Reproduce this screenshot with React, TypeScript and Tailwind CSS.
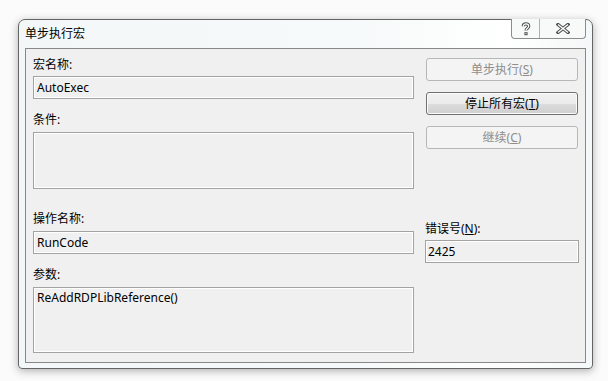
import React from "react";

const font = { fontFamily: '"Noto Sans", "Noto Sans CJK SC", sans-serif' };

function TextBox({ h, children, multi, pl = "pl-[3px]" }: { h: string; children?: React.ReactNode; multi?: boolean; pl?: string }) {
  return (
    <div
      className={`${h} border border-[#a3a3a3] bg-[#f0f0f0] shadow-[inset_0_0_0_1px_#ffffff] ${pl} text-[12px] text-black ${
        multi ? "pt-[1px] leading-[16px]" : "flex items-center leading-[16px]"
      }`}
    >
      {children}
    </div>
  );
}

function Label({ mt, children }: { mt: string; children: React.ReactNode }) {
  return <div className={`${mt} h-[16px] text-[12px] leading-[16px] text-black whitespace-nowrap`}>{children}</div>;
}

function Btn({ mt, enabled, children }: { mt: string; enabled?: boolean; children: React.ReactNode }) {
  return (
    <div
      className={`${mt} ml-[1px] w-[152px] h-[23px] rounded-[3px] border flex items-center justify-center text-[12px] leading-[16px] ${
        enabled
          ? "border-[#707070] text-black bg-[linear-gradient(to_bottom,#f2f2f2_0%,#ebebeb_50%,#dddddd_50%,#cfcfcf_100%)] shadow-[inset_0_0_0_1px_#fbfbfb]"
          : "border-[#b5b8ba] text-[#8d8d8d] bg-[#f4f4f4]"
      }`}
    >
      {children}
    </div>
  );
}

export default function App() {
  return (
    <div className="w-[608px] h-[381px] bg-[#fbfbfb] pl-[18px] pt-[19px] overflow-hidden" style={font}>
      <div className="relative w-[575px] h-[350px] border border-[#656565] rounded-t-[7px] rounded-b-[4px] bg-[linear-gradient(to_right,#f3f7f7,#f7fafa_60%,#ffffff_85%,#f5f8f8)] shadow-[0_2px_9px_rgba(0,0,0,0.3)] flex flex-col">
        <div className="h-[28px] flex items-center pl-[6px] text-[12px] leading-[16px] text-black">单步执行宏</div>
        <div className="absolute top-[-1px] right-[6px] flex h-[20px] border border-t-0 border-[#8c8c8c] rounded-b-[4px] bg-[#f8fafa]">
          <div className="w-[28px] h-full flex items-center justify-center border-r border-[#b0b0b0]">
            <svg width="10" height="14" viewBox="0 0 10 14">
              <path d="M2.3 4.2 C2.3 1.2 7.7 1.2 7.7 4.2 C7.7 6.4 5 6.2 5 8.6" fill="none" stroke="#505050" strokeWidth="3.2" strokeLinecap="butt" />
              <rect x="3.4" y="10.2" width="3.2" height="3" fill="#505050" />
              <path d="M2.3 4.2 C2.3 1.2 7.7 1.2 7.7 4.2 C7.7 6.4 5 6.2 5 8.6" fill="none" stroke="#ffffff" strokeWidth="1.2" />
              <rect x="4.4" y="11.2" width="1.2" height="1" fill="#ffffff" />
            </svg>
          </div>
          <div className="w-[45px] h-full flex items-center justify-center">
            <svg width="14" height="11" viewBox="0 0 14 11">
              <path d="M2 1.5 L12 9.5 M12 1.5 L2 9.5" stroke="#505050" strokeWidth="3.4" strokeLinecap="square" />
              <path d="M2 1.5 L12 9.5 M12 1.5 L2 9.5" stroke="#ffffff" strokeWidth="1.3" strokeLinecap="butt" />
            </svg>
          </div>
        </div>
        <div className="mx-[6px] mb-[5px] flex-1 border border-[#888888] bg-[#f0f0f0] flex">
          <div className="ml-[7px] w-[381px] flex flex-col">
            <Label mt="mt-[8px]">宏名称:</Label>
            <div className="mt-[3px]">
              <TextBox h="h-[23px]">AutoExec</TextBox>
            </div>
            <Label mt="mt-[13px]">条件:</Label>
            <div className="mt-[4px]">
              <TextBox h="h-[57px]" multi />
            </div>
            <Label mt="mt-[22px]">操作名称:</Label>
            <div className="mt-[4px]">
              <TextBox h="h-[23px]">RunCode</TextBox>
            </div>
            <Label mt="mt-[13px]">参数:</Label>
            <div className="mt-[4px]">
              <TextBox h="h-[66px]" multi>
                <div className="pt-[1px]">ReAddRDPLibReference()</div>
              </TextBox>
            </div>
          </div>
          <div className="ml-[11px] w-[154px] flex flex-col">
            <Btn mt="mt-[9px]">
              单步执行(<span className="underline">S</span>)
            </Btn>
            <Btn mt="mt-[11px]" enabled>
              停止所有宏(<span className="underline">T</span>)
            </Btn>
            <Btn mt="mt-[11px]">
              继续(<span className="underline">C</span>)
            </Btn>
            <Label mt="mt-[72px]">
              错误号(<span className="underline">N</span>):
            </Label>
            <div className="mt-[3px]">
              <TextBox h="h-[23px]" pl="pl-[2px]">2425</TextBox>
            </div>
          </div>
        </div>
      </div>
    </div>
  );
}
